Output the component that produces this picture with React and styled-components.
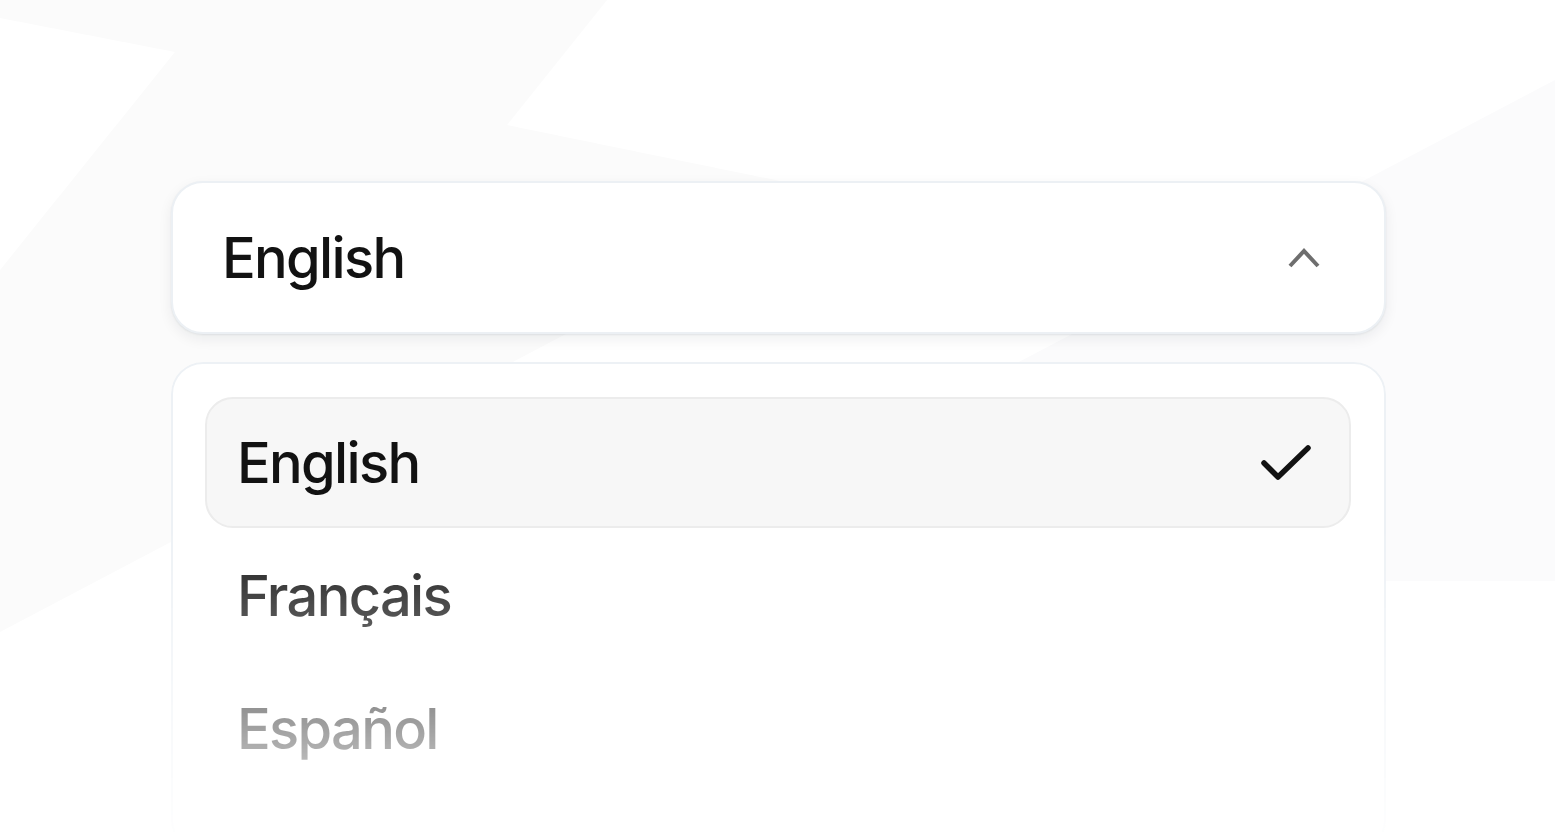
import React from "react";
import styled, { createGlobalStyle } from "styled-components";

const GlobalStyle = createGlobalStyle`
  *, *::before, *::after { box-sizing: border-box; }
  html, body { margin: 0; padding: 0; background: #ffffff; }
  body {
    font-family: Inter, "Noto Sans", "Liberation Sans", sans-serif;
    -webkit-font-smoothing: antialiased;
  }
`;

const Page = styled.div`
  position: relative;
  width: 100%;
  height: 832px;
  overflow: hidden;
  background: #ffffff;
`;

const Backdrop = styled.svg`
  position: absolute;
  inset: 0;
  width: 100%;
  height: 100%;
`;

const Select = styled.div`
  position: relative;
  width: 1215px;
  margin-left: 171px;
  padding-top: 181px;
  display: flex;
  flex-direction: column;
  gap: 28px;
`;

const Trigger = styled.button`
  width: 100%;
  height: 153px;
  display: flex;
  align-items: center;
  justify-content: space-between;
  padding: 0 64px 0 49px;
  background: #ffffff;
  border: 2px solid #ecf0f4;
  border-radius: 32px;
  box-shadow: 0 5px 14px rgba(15, 23, 42, 0.07), 0 1px 2px rgba(15, 23, 42, 0.07);
  font-family: inherit;
  font-size: 56px;
  font-weight: 500;
  letter-spacing: -0.03em;
  color: #121212;
  cursor: pointer;
`;

const Panel = styled.div`
  height: 490px;
  display: flex;
  flex-direction: column;
  gap: 2px;
  padding: 33px 33px 0 32px;
  background: #ffffff;
  border: 2px solid #edf1f5;
  border-radius: 32px;
  -webkit-mask-image: linear-gradient(to bottom, #000 33%, rgba(0, 0, 0, 0.03) 100%);
  mask-image: linear-gradient(to bottom, #000 33%, rgba(0, 0, 0, 0.03) 100%);
`;

const Option = styled.div`
  height: 131px;
  flex-shrink: 0;
  display: flex;
  align-items: center;
  justify-content: space-between;
  padding: 0 37px 0 30px;
  border-radius: 28px;
  border: 2px solid ${(p) => (p.$selected ? "#ececec" : "transparent")};
  background: ${(p) => (p.$selected ? "#f7f7f7" : "transparent")};
  font-size: 56px;
  font-weight: 500;
  letter-spacing: -0.03em;
  color: #121212;
`;

const Chevron = () => (
  <svg width="32" height="22" viewBox="0 0 32 22" fill="none">
    <polyline points="2,19 16,4 30,19" stroke="#6e6e6e" strokeWidth="4" strokeLinejoin="miter" />
  </svg>
);

const Check = () => (
  <svg width="52" height="40" viewBox="0 0 52 40" fill="none">
    <polyline points="4,20 18,34 48,5" stroke="#121212" strokeWidth="5.5" strokeLinecap="round" strokeLinejoin="round" />
  </svg>
);

const languages = ["English", "Français", "Español"];

export default function App() {
  const selected = "English";
  return (
    <Page>
      <GlobalStyle />
      <Backdrop viewBox="0 0 1555 832" preserveAspectRatio="none">
        <polygon
          points="0,0 607,0 507,125 800,185 640,295 0,632 0,270 175,52 0,18"
          fill="#fbfbfb"
        />
        <polygon points="1555,80 1000,372 1000,581 1555,581" fill="#fbfbfc" />
      </Backdrop>
      <Select>
        <Trigger>
          <span>{selected}</span>
          <Chevron />
        </Trigger>
        <Panel>
          {languages.map((lang) => (
            <Option key={lang} $selected={lang === selected}>
              <span>{lang}</span>
              {lang === selected && <Check />}
            </Option>
          ))}
        </Panel>
      </Select>
    </Page>
  );
}
